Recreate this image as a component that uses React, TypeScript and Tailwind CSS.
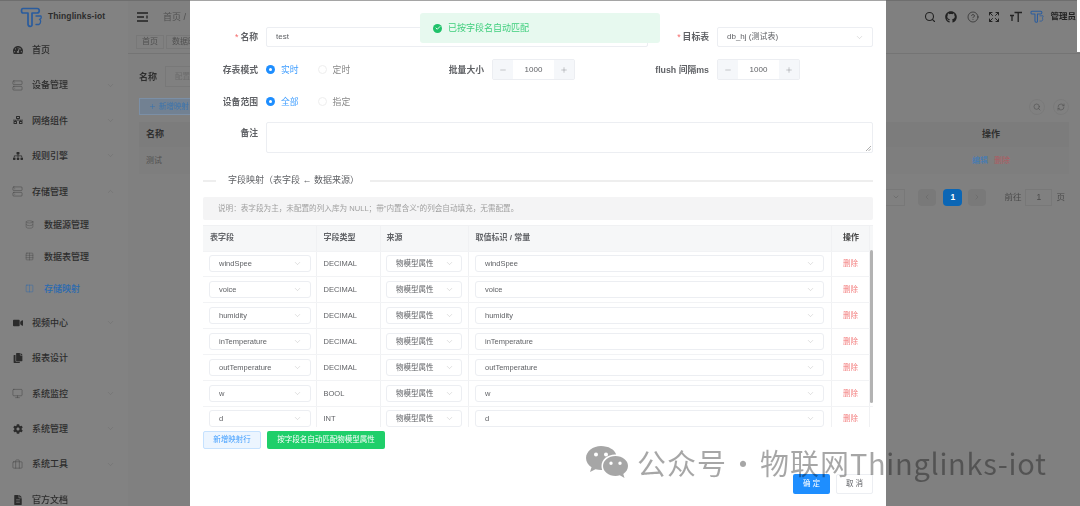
import React from "react";
import { Search, CircleHelp, Expand, ChevronDown, ChevronUp, ChevronLeft, ChevronRight, Database, Server, Table, Columns2, Monitor, Briefcase, RefreshCw, Plus, Minus, Check } from "lucide-react";
import { FaTachometerAlt, FaSitemap, FaVideo, FaCopy, FaCog, FaFileAlt, FaNetworkWired, FaGithub } from "react-icons/fa";

const Logo = ({ s = 1 }: { s?: number }) => (
  <svg width={24 * s} height={24 * s} viewBox="0 0 24 24" fill="none" stroke="#2a5c9e" strokeWidth="1.700" strokeLinejoin="round" strokeLinecap="round">
    <path d="M3 3.500C1 3.500 1 8 3 8h5v11c0 3 4 3 4 1V8h5c3 0 3-4.500 0-4.500z" />
    <path d="M16 11h5c.8 2-.4 3-1.500 3.300 1.500.5 1.700 3.700-.5 5.200h-3" strokeWidth="1.300" />
  </svg>
);

type Item = { icon: React.ReactNode; label: string; arrow?: "down" | "up"; sub?: boolean; active?: boolean };
const lucide = { size: 11, strokeWidth: 1.200, className: "text-[#4a4a4a]" };
const menu: Item[] = [
  { icon: <FaTachometerAlt size={10} />, label: "首页" },
  { icon: <Server {...lucide} />, label: "设备管理", arrow: "down" },
  { icon: <FaNetworkWired size={10} />, label: "网络组件", arrow: "down" },
  { icon: <FaSitemap size={10} />, label: "规则引擎", arrow: "down" },
  { icon: <Server {...lucide} />, label: "存储管理", arrow: "up" },
  { icon: <Database size={9} strokeWidth={1.200} className="text-[#4a4a4a]" />, label: "数据源管理", sub: true },
  { icon: <Table size={9} strokeWidth={1.200} className="text-[#4a4a4a]" />, label: "数据表管理", sub: true },
  { icon: <Columns2 size={9} strokeWidth={1.200} />, label: "存储映射", sub: true, active: true },
  { icon: <FaVideo size={10} />, label: "视频中心", arrow: "down" },
  { icon: <FaCopy size={10} />, label: "报表设计" },
  { icon: <Monitor {...lucide} />, label: "系统监控", arrow: "down" },
  { icon: <FaCog size={10} />, label: "系统管理", arrow: "down" },
  { icon: <Briefcase {...lucide} />, label: "系统工具", arrow: "down" },
  { icon: <FaFileAlt size={10} />, label: "官方文档" },
];

const Sidebar = () => (
  <aside className="w-[128px] shrink-0 flex flex-col text-[#2c2c2c] bg-[#828282]">
    <div className="h-[31px] shrink-0 flex items-center pl-[20px] gap-[4px]">
      <Logo />
      <span className="text-[8.500px] font-bold tracking-[0.1px]">Thinglinks-iot</span>
    </div>
    {menu.map((m) =>
      m.sub ? (
        <div key={m.label} className={`h-[32px] shrink-0 flex items-center pl-[25px] gap-[10px] text-[9px] ${m.active ? "text-[#2a6ab0]" : ""}`}>
          <span className="w-[9px] flex justify-center">{m.icon}</span>
          <span className="font-medium translate-y-[1px]">{m.label}</span>
        </div>
      ) : (
        <div key={m.label} className="h-[35.400px] shrink-0 flex items-center pl-[12px] text-[9px]">
          <span className="w-[11px] flex justify-center mr-[9px]">{m.icon}</span>
          <span className="flex-1 font-medium translate-y-[1px]">{m.label}</span>
          {m.arrow === "down" && <ChevronDown size={9} strokeWidth={1} className="mr-[13px] text-[#666]" />}
          {m.arrow === "up" && <ChevronUp size={9} strokeWidth={1} className="mr-[13px] text-[#666]" />}
        </div>
      )
    )}
  </aside>
);

const Page = () => (
  <main className="flex-1 min-w-0 flex flex-col text-[#2c2c2c]">
    <header className="h-[31px] shrink-0 flex items-center pl-[9px] pr-[4px] text-[9px]">
      <svg width="11" height="10" viewBox="0 0 11 10" fill="none" stroke="#222" strokeWidth="1.300" className="mr-[15px]"><path d="M0 1h11M0 5h7M0 9h11M10 3.500v3" /></svg>
      <span className="text-[#505050] translate-y-[1px]">首页 /</span>
      <div className="flex-1" />
      <div className="flex items-center gap-[9.500px] text-[#222]">
        <Search size={12} strokeWidth={2.200} />
        <FaGithub size={12} />
        <CircleHelp size={12} strokeWidth={1.300} />
        <Expand size={12} strokeWidth={2} />
        <svg width="12" height="12" viewBox="0 0 12 12" fill="none" stroke="#222" strokeWidth="1.300" className="-mr-[1.500px]"><path d="M0 4.500h4M2 4.500V10M4.500 1.500H12M8.200 1.500V11" /></svg>
        <div className="flex items-center gap-[6px]"><Logo s={0.62} /><span className="text-[8.500px] font-bold whitespace-nowrap">管理员</span></div>
      </div>
    </header>
    <div className="h-[22px] shrink-0 border-b border-[#747474] pl-[8px] flex items-start pt-[3px] gap-[2px] text-[8px] text-[#505050]">
      <span className="h-[14px] px-[5px] border border-[#787878] flex items-center">首页</span>
      <span className="h-[14px] px-[5px] border border-[#787878] flex items-center">数据映射</span>
    </div>
    <div className="h-[21px] mt-[12px] shrink-0 pl-[11px] flex items-center gap-[8px]">
      <span className="text-[9px] font-bold text-[#2f2f2f] translate-y-[1px]">名称</span>
      <span className="h-[21px] w-[60px] border border-[#787878] pl-[9px] flex items-center text-[7.500px] text-[#6c6c6c]">配置名称</span>
    </div>
    <div className="h-[17px] mt-[11px] shrink-0 flex items-center justify-between pl-[11px] pr-[11px]">
      <span className="h-[17px] w-[70px] bg-[#728192] border border-[#7b8fa6] pl-[9px] flex items-center gap-[3px] text-[7.500px] text-[#3b74ad]"><Plus size={7} />新增映射</span>
      <div className="flex gap-[8px] text-[#555]">
        <span className="w-[16px] h-[16px] rounded-full border border-[#7a7a7a] flex items-center justify-center"><Search size={8} /></span>
        <span className="w-[16px] h-[16px] rounded-full border border-[#7a7a7a] flex items-center justify-center"><RefreshCw size={8} /></span>
      </div>
    </div>
    <div className="mx-[11px] mt-[7px] h-[25px] shrink-0 bg-[#7c7c7c] flex items-center justify-between px-[7px] text-[9px] font-bold text-[#2f2f2f]">
      <span>名称</span><span className="mr-[62px]">操作</span>
    </div>
    <div className="mx-[11px] h-[27px] shrink-0 bg-[#7e7e7e] flex items-center justify-between px-[7px] text-[8px] text-[#505050]">
      <span>测试</span>
      <span className="flex gap-[6px] mr-[52px]"><span className="text-[#3a7bbd]">编辑</span><span className="text-[#b05a60]">删除</span></span>
    </div>
    <div className="mt-[14px] h-[18px] shrink-0 flex items-center justify-end pr-[15px] text-[8.500px] text-[#4a4a4a]">
      <span className="w-[30px] h-[17px] border border-[#787878] flex items-center justify-end pr-[4px] mr-[13px] text-[#666]"><ChevronDown size={8} /></span>
      <span className="w-[18px] h-[17px] rounded-sm bg-[#797979] flex items-center justify-center mr-[7px] text-[#686868]"><ChevronLeft size={8} /></span>
      <span className="w-[19px] h-[17px] rounded-sm bg-[#0b66b5] text-white font-bold flex items-center justify-center mr-[6px]">1</span>
      <span className="w-[18px] h-[17px] rounded-sm bg-[#797979] flex items-center justify-center mr-[18px] text-[#686868]"><ChevronRight size={8} /></span>
      <span>前往</span>
      <span className="w-[27px] h-[17px] border border-[#787878] flex items-center justify-center mx-[4px]">1</span>
      <span>页</span>
    </div>
  </main>
);

const Label = ({ req, w, children }: { req?: boolean; w: string; children: React.ReactNode }) => (
  <label className={`${w} shrink-0 mr-[8px] text-right text-[8.800px] font-bold text-[#606266] whitespace-nowrap translate-y-[1px]`}>
    {req && <span className="text-[#f56c6c] font-normal mr-[2px]">*</span>}
    {children}
  </label>
);

const Num = () => (
  <div className="w-[83px] h-[21px] flex items-center border border-[#eceef2] rounded-[2px] text-[8px] text-[#606266] shrink-0">
    <span className="w-[20px] h-full bg-[#f5f7fa] flex items-center justify-center"><Minus size={8} strokeWidth={1} /></span>
    <span className="flex-1 text-center">1000</span>
    <span className="w-[20px] h-full bg-[#f5f7fa] flex items-center justify-center"><Plus size={8} strokeWidth={1} /></span>
  </div>
);

const Radio = ({ on, children }: { on?: boolean; children: React.ReactNode }) => (
  <span className={`flex items-center gap-[6px] text-[8.800px] ${on ? "text-[#409eff]" : "text-[#888]"}`}>
    {on ? (
      <span className="w-[9px] h-[9px] rounded-full bg-[#1e8eff] flex items-center justify-center"><span className="w-[3px] h-[3px] rounded-full bg-white" /></span>
    ) : (
      <span className="w-[9px] h-[9px] rounded-full border border-[#eeeeee]" />
    )}
    <span className="translate-y-[0.5px]">{children}</span>
  </span>
);

const Select = ({ value, className, chevron = "mr-[8px]" }: { value: string; className: string; chevron?: string }) => (
  <div className={`h-[17px] flex items-center justify-between border border-[#eceef2] rounded-[3px] pl-[9px] text-[7.500px] text-[#606266] ${className}`}>
    <span className="whitespace-nowrap">{value}</span>
    <ChevronDown size={9} strokeWidth={0.800} className={`text-[#999] ${chevron}`} />
  </div>
);

const rows = [
  ["windSpee", "DECIMAL"],
  ["voice", "DECIMAL"],
  ["humidity", "DECIMAL"],
  ["inTemperature", "DECIMAL"],
  ["outTemperature", "DECIMAL"],
  ["w", "BOOL"],
  ["d", "INT"],
];
const grid = "grid grid-cols-[113.500px_64px_88px_363.500px_37.500px]";
const cell = "border-r border-[#f0f1f3] flex items-center";

const FieldTable = () => (
  <div className="relative mt-[5px] h-[202px] overflow-hidden">
    <div className={`${grid} h-[25.500px] pr-[3.500px] bg-[#f6f7f8] border-t border-[#f0f1f3] text-[8px] font-bold text-[#606266]`}>
      <div className={`${cell} pl-[7px]`}>表字段</div>
      <div className={`${cell} pl-[7px]`}>字段类型</div>
      <div className={`${cell} pl-[6px]`}>来源</div>
      <div className={`${cell} pl-[7px]`}>取值标识 / 常量</div>
      <div className={`${cell} pl-[11px] text-[#444]`}>操作</div>
    </div>
    {rows.map(([f, t]) => (
      <div key={f} className={`${grid} h-[25.850px] border-t border-[#f2f3f5]`}>
        <div className={`${cell} pl-[6px]`}><Select value={f} className="w-[101.500px]" /></div>
        <div className={`${cell} pl-[7px] text-[7.500px] text-[#606266]`}>{t}</div>
        <div className={`${cell} pl-[5.500px]`}><Select value="物模型属性" className="w-[76px]" chevron="mr-[7px]" /></div>
        <div className={`${cell} pl-[6.500px]`}><Select value={f} className="w-[349px]" /></div>
        <div className={`${cell} pl-[11px] text-[7.500px] text-[#f37f7f]`}>删除</div>
      </div>
    ))}
    <span className="absolute right-0 top-[25px] w-[3.500px] h-[153px] bg-[#b3b3b3] rounded-sm" />
  </div>
);

const Modal = () => (
  <div className="absolute left-[190px] top-0 w-[696px] h-[506px] bg-white border-t border-[#a5a5a5] pt-[26px] px-[13px] flex flex-col blur-[0.35px]">
    <div className="flex items-center h-[20px]">
      <Label req w="w-[55px]">名称</Label>
      <div className="w-[382px] h-[20px] border border-[#eceef2] rounded-[2px] pl-[9px] flex items-center text-[8px] text-[#606266]">test</div>
      <Label req w="w-[53px] ml-[8px]">目标表</Label>
      <div className="flex-1 h-[20px] border border-[#eceef2] rounded-[2px] pl-[9px] pr-[8px] flex items-center justify-between text-[8px] text-[#606266]">
        db_hj (测试表)<ChevronDown size={9} strokeWidth={0.800} className="text-[#999]" />
      </div>
    </div>
    <div className="flex items-center h-[21px] mt-[12px]">
      <Label w="w-[55px]">存表模式</Label>
      <div className="w-[163px] flex gap-[19px]"><Radio on>实时</Radio><Radio>定时</Radio></div>
      <Label w="w-[55px]">批量大小</Label>
      <Num />
      <Label w="w-[134px]">flush 间隔ms</Label>
      <Num />
    </div>
    <div className="flex items-center h-[21px] mt-[11px]">
      <Label w="w-[55px]">设备范围</Label>
      <div className="flex gap-[19px]"><Radio on>全部</Radio><Radio>指定</Radio></div>
    </div>
    <div className="flex mt-[10px] h-[31px]">
      <Label w="w-[55px] pt-[4px]">备注</Label>
      <div className="relative flex-1 border border-[#eceef2] rounded-[2px]">
        <svg width="5" height="5" viewBox="0 0 5 5" stroke="#777" strokeWidth="0.600" className="absolute right-[1px] bottom-[1px]"><path d="M0 5L5 0M2.500 5L5 2.500" /></svg>
      </div>
    </div>
    <div className="flex items-center h-[12px] mt-[22px]">
      <span className="w-[13px] h-[1.500px] bg-[#eeeeee]" />
      <span className="w-[154px] pl-[12px] text-[9px] text-[#606266] whitespace-nowrap">字段映射（表字段 ← 数据来源）</span>
      <span className="flex-1 h-[1.500px] bg-[#eeeeee]" />
    </div>
    <div className="mt-[10px] h-[23px] shrink-0 bg-[#f4f4f5] rounded-[2px] pl-[15px] flex items-center text-[7.600px] text-[#a0a0a0]">
      说明：表字段为主，未配置的列入库为 NULL；带"内置含义"的列会自动填充，无需配置。
    </div>
    <FieldTable />
    <div className="flex gap-[6px] mt-[4px]">
      <button className="w-[58px] h-[18px] bg-[#ecf5ff] border border-[#c6e2ff] rounded-[2px] text-[7.500px] text-[#409eff]">新增映射行</button>
      <button className="w-[118px] h-[18px] bg-[#1fcf6a] rounded-[2px] text-[7.500px] text-white">按字段名自动匹配物模型属性</button>
    </div>
    <div className="flex justify-end gap-[6px] mt-[25px]">
      <button className="w-[37px] h-[20px] bg-[#1e8eff] rounded-[2px] text-[7.500px] text-white">确 定</button>
      <button className="w-[37px] h-[20px] border border-[#eceef2] rounded-[2px] text-[7.500px] text-[#606266]">取 消</button>
    </div>
  </div>
);

const Toast = () => (
  <div className="absolute left-[420px] top-[13px] w-[240px] h-[30px] bg-[#e7f9ef] rounded-[3px] pl-[13px] flex items-center gap-[6px] text-[9px] text-[#3fce7c] blur-[0.35px]">
    <span className="w-[9px] h-[9px] rounded-full bg-[#1fc26a] flex items-center justify-center"><Check size={6} strokeWidth={3.500} className="text-white" /></span>
    <span className="translate-y-[0.5px]">已按字段名自动匹配</span>
  </div>
);

const Watermark = () => (
  <div className="absolute left-[586px] top-[445px] flex items-center gap-[9px] text-[29px] leading-[26px] tracking-[1px] [word-spacing:-6px] text-black/35 whitespace-nowrap pointer-events-none font-['Noto_Sans_CJK_SC',sans-serif]">
    <svg width="42" height="34" viewBox="0 0 42 34" fill="#000" fillOpacity="0.35">
      <path fillRule="evenodd" d="M15 1C7 1 0 6.500 0 13c0 4 2.200 7 5.500 9.300L4 27l5.500-2.800c1.800.5 3.500.8 5.500.8h1.200c-.5-1.300-.7-2.700-.7-4 0-6.500 6-11.500 13.500-11.500h1.200C28.500 4.500 22.500 1 15 1zM10 7.500a2 2 0 110 4 2 2 0 010-4zm10 0a2 2 0 110 4 2 2 0 010-4z" />
      <path fillRule="evenodd" d="M29.500 11C22.500 11 17 15.500 17 21s5.500 10 12.500 10c1.500 0 3-.2 4.300-.7L38.500 33 37.300 29c2.900-2 4.700-4.800 4.700-8 0-5.500-5.500-10-12.500-10zM25 16.500a1.700 1.700 0 110 3.400 1.700 1.700 0 010-3.400zm9 0a1.700 1.700 0 110 3.400 1.700 1.700 0 010-3.400z" />
    </svg>
    <span>公众号 · 物联网<span className="tracking-[0.7px]">Thinglinks-iot</span></span>
  </div>
);

export default function App() {
  return (
    <div className="relative w-[1080px] h-[506px] overflow-hidden bg-[#808080] font-['Liberation_Sans','Noto_Sans_CJK_SC',sans-serif]">
      <div className="flex h-[506px] border-t border-[#6e6e6e] blur-[0.35px]">
        <Sidebar />
        <Page />
      </div>
      <span className="absolute right-0 top-0 w-[3px] h-[52px] bg-white" />
      <Modal />
      <Toast />
      <Watermark />
    </div>
  );
}
